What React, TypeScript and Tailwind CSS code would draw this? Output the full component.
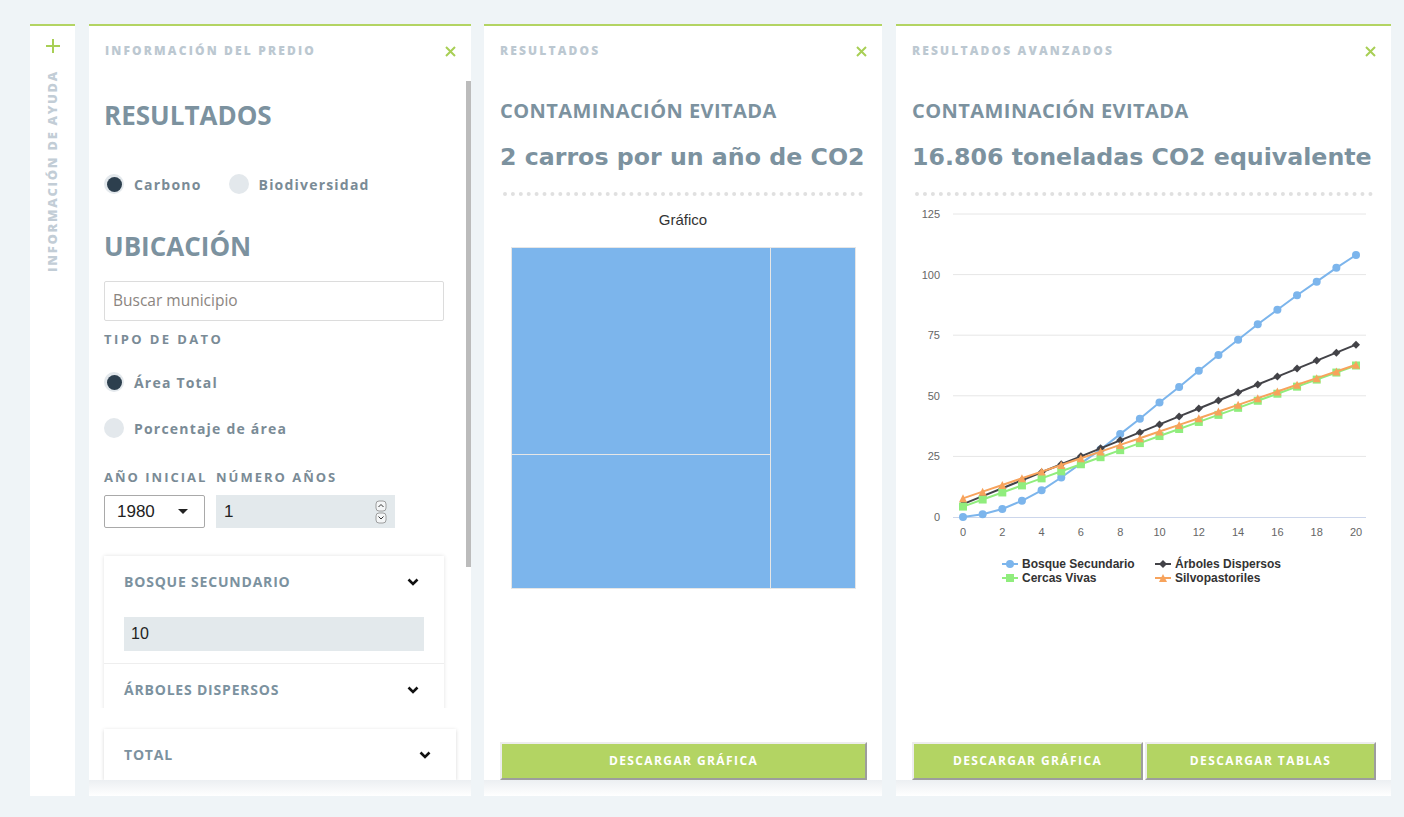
import React from "react";

const blue = [0, 1.1, 3.3, 6.7, 11.0, 16.3, 22.1, 27.8, 34.2, 40.5, 47.2, 53.6, 60.3, 66.8, 73.1, 79.5, 85.5, 91.5, 97.1, 102.8, 108.1];
const idx = Array.from({ length: 21 }, (_, i) => i);
const black = idx.map((i) => 5.3 + 3.29 * i);
const green = idx.map((i) => 4.3 + 2.91 * i);
const orange = idx.map((i) => 7.7 + 2.755 * i);

const xs = (i: number) => 51 + i * 19.65;
const ys = (v: number) => 312 - v * 2.424;

function CloseX() {
  return (
    <svg width="11" height="11" viewBox="0 0 11 11" className="mt-[3px] shrink-0">
      <path d="M1 1L10 10M10 1L1 10" stroke="#a8cf55" strokeWidth="2" />
    </svg>
  );
}

function Chevron() {
  return (
    <svg width="12" height="8" viewBox="0 0 12 8" className="shrink-0">
      <path d="M1.5 1.5L6 6L10.5 1.5" fill="none" stroke="#111" strokeWidth="2.6" />
    </svg>
  );
}

function PanelHeader({ title }: { title: string }) {
  return (
    <div className="h-[55px] shrink-0 flex items-start justify-between pl-[16px] pr-[15px] pt-[17px]">
      <span className="text-[12px] leading-[16px] font-extrabold tracking-[2.15px] text-[#bcc8d1]">{title}</span>
      <CloseX />
    </div>
  );
}

function Radio({ checked }: { checked?: boolean }) {
  return checked ? (
    <span className="w-[20px] h-[20px] rounded-full bg-[#e3e8ec] flex items-center justify-center shrink-0">
      <span className="w-[15px] h-[15px] rounded-full bg-[#2d3f4e]" />
    </span>
  ) : (
    <span className="w-[20px] h-[20px] rounded-full bg-[#e3e8ec] shrink-0" />
  );
}

function AccHeader({ title }: { title: string }) {
  return (
    <div className="h-[51px] flex items-center justify-between pl-[20px] pr-[25px]">
      <span className="text-[14px] font-bold tracking-[0.8px] text-[#7c929f]">{title}</span>
      <Chevron />
    </div>
  );
}

function AccInput() {
  return (
    <div className="px-[20px] pt-[10px] pb-[12px]">
      <div className="h-[34px] bg-[#e3e9ec] flex items-center pl-[7px] text-[16px] text-[#222] font-['Liberation_Sans',Arial,sans-serif]">
        10
      </div>
    </div>
  );
}

function Footer({ children }: { children: React.ReactNode }) {
  return (
    <div className="shrink-0 flex flex-col">
      <div className="flex gap-[2px] pl-[16px] pr-[15px]">{children}</div>
      <div className="h-[16px] bg-gradient-to-b from-[#eceff2] to-white" />
    </div>
  );
}

function GreenButton({ label }: { label: string }) {
  return (
    <button className="flex-1 h-[38px] bg-[#b3d463] border-[2px] border-t-[#ededed] border-l-[#ededed] border-r-[#9d9d9d] border-b-[#9d9d9d] text-white text-[12px] font-bold tracking-[1.4px]">
      {label}
    </button>
  );
}

function Sidebar() {
  return (
    <div className="w-[45px] h-[772px] bg-white border-t-2 border-[#b3d463] flex flex-col items-center">
      <svg className="mt-[13px] ml-[1px]" width="14" height="14" viewBox="0 0 14 14">
        <path d="M7 0V14M0 7H14" stroke="#a8cf55" strokeWidth="2" />
      </svg>
      <div className="mt-[17px] [writing-mode:vertical-rl] rotate-180 text-[13px] font-extrabold tracking-[1.7px] text-[#c2cdd6] leading-none">
        INFORMACIÓN DE AYUDA
      </div>
    </div>
  );
}

const labelCls = "text-[14px] font-bold tracking-[1.2px] text-[#7a8b96]";
const smallHead = "text-[13px] leading-[16px] font-bold tracking-[2.4px] text-[#7a8b96]";
const bigHead = "text-[26px] leading-[32px] font-bold text-[#7c929f]";

function Panel1() {
  return (
    <div className="ml-[14px] w-[382px] h-[772px] bg-white border-t-2 border-[#b3d463] flex flex-col">
      <PanelHeader title="INFORMACIÓN DEL PREDIO" />
      <div className="h-[627px] shrink-0 flex">
        <div className="flex-1 overflow-hidden pl-[15px] pr-[22px]">
          <h2 className={"mt-[18px] " + bigHead}>RESULTADOS</h2>
          <div className="mt-[43px] h-[20px] flex items-center">
            <Radio checked />
            <span className={"ml-[10px] " + labelCls}>Carbono</span>
            <span className="ml-[27px]" />
            <Radio />
            <span className={"ml-[10px] " + labelCls}>Biodiversidad</span>
          </div>
          <h2 className={"mt-[36px] " + bigHead}>UBICACIÓN</h2>
          <div className="mt-[19px] h-[40px] border border-[#dcdcdc] rounded-[2px] flex items-center pl-[8px] text-[15.5px] text-[#8b857f]">
            Buscar municipio
          </div>
          <div className={"mt-[10px] " + smallHead}>TIPO DE DATO</div>
          <div className="mt-[25px] h-[20px] flex items-center">
            <Radio checked />
            <span className={"ml-[10px] " + labelCls}>Área Total</span>
          </div>
          <div className="mt-[26px] h-[20px] flex items-center">
            <Radio />
            <span className={"ml-[10px] " + labelCls}>Porcentaje de área</span>
          </div>
          <div className="mt-[31px] flex text-[13px] leading-[16px] font-bold tracking-[2px] text-[#7a8b96]">
            <span className="w-[112px] whitespace-nowrap">AÑO INICIAL</span>
            <span className="whitespace-nowrap">NÚMERO AÑOS</span>
          </div>
          <div className="mt-[10px] flex gap-[11px]">
            <div className="w-[101px] h-[33px] border border-[#a9a9a9] rounded-[2px] flex items-center justify-between pl-[12px] pr-[16px] font-['Liberation_Sans',Arial,sans-serif] text-[17px] text-[#222]">
              <span>1980</span>
              <svg width="10" height="5" viewBox="0 0 10 5">
                <path d="M0 0H10L5 5Z" fill="#222" />
              </svg>
            </div>
            <div className="w-[179px] h-[33px] bg-[#e3e9ec] flex items-center justify-between pl-[8px] pr-[8px] font-['Liberation_Sans',Arial,sans-serif] text-[17px] text-[#222]">
              <span>1</span>
              <svg width="12" height="24" viewBox="0 0 12 24">
                <rect x="1" y="1" width="10" height="10" rx="3" fill="#f4f6f7" stroke="#8a8a8a" strokeWidth="0.8" />
                <path d="M3.5 7L6 4.5L8.5 7" fill="none" stroke="#333" strokeWidth="1" />
                <rect x="1" y="13" width="10" height="10" rx="3" fill="#f4f6f7" stroke="#8a8a8a" strokeWidth="0.8" />
                <path d="M3.5 16.5L6 19L8.5 16.5" fill="none" stroke="#333" strokeWidth="1" />
              </svg>
            </div>
          </div>
          <div className="mt-[28px] bg-white shadow-[0_0_4px_rgba(0,0,0,0.12)]">
            <AccHeader title="BOSQUE SECUNDARIO" />
            <AccInput />
            <div className="h-px bg-[#eeeeee]" />
            <AccHeader title="ÁRBOLES DISPERSOS" />
          </div>
        </div>
        <div className="w-[5px] shrink-0">
          <div className="h-[486px] bg-[#bcbcbc]" />
        </div>
      </div>
      <div className="flex-1 flex flex-col">
        <div className="pl-[15px] pr-[15px] pt-[21px]">
          <div className="h-[51px] bg-white shadow-[0_1px_4px_rgba(0,0,0,0.16)] flex items-center justify-between pl-[20px] pr-[25px]">
            <span className="text-[14px] font-bold tracking-[0.8px] text-[#7c929f]">TOTAL</span>
            <Chevron />
          </div>
        </div>
        <div className="flex-1 bg-gradient-to-b from-[#eceff2] to-white" />
      </div>
    </div>
  );
}

const contHead = "mt-[16px] text-[20px] leading-[28px] font-bold tracking-[0.45px] text-[#7c929f] whitespace-nowrap";
const bigValue = "mt-[16px] font-['DejaVu_Sans',sans-serif] text-[23.7px] leading-[32px] font-bold text-[#7c929f] whitespace-nowrap";

function Panel2() {
  return (
    <div className="ml-[13px] w-[398px] h-[772px] bg-white border-t-2 border-[#b3d463] flex flex-col">
      <PanelHeader title="RESULTADOS" />
      <div className="flex-1 px-[16px]">
        <div className={contHead}>CONTAMINACIÓN EVITADA</div>
        <div className={bigValue}>2 carros por un año de CO2</div>
        <div className="mt-[19px] mx-[3px] border-b-4 border-dotted border-[#e0e0e0]" />
        <div className="mt-[14px] text-center font-['Liberation_Sans',Arial,sans-serif] text-[15px] leading-[20px] text-[#333]">
          Gráfico
        </div>
        <div className="mt-[17px] mx-auto w-[345px] h-[342px] flex bg-[#e6e6e6] gap-px p-px">
          <div className="w-[258px] flex flex-col gap-px">
            <div className="h-[206px] bg-[#7cb5ec]" />
            <div className="flex-1 bg-[#7cb5ec]" />
          </div>
          <div className="flex-1 bg-[#7cb5ec]" />
        </div>
      </div>
      <Footer>
        <GreenButton label="DESCARGAR GRÁFICA" />
      </Footer>
    </div>
  );
}

function Marker({ kind, x, y }: { kind: string; x: number; y: number }) {
  if (kind === "circle") return <circle cx={x} cy={y} r={4} fill="#7cb5ec" />;
  if (kind === "diamond")
    return <path d={`M${x} ${y - 4}L${x + 4} ${y}L${x} ${y + 4}L${x - 4} ${y}Z`} fill="#434348" />;
  if (kind === "square") return <rect x={x - 4} y={y - 4} width={8} height={8} fill="#90ed7d" />;
  return <path d={`M${x} ${y - 4}L${x + 4} ${y + 4}L${x - 4} ${y + 4}Z`} fill="#f7a35c" />;
}

function Series({ data, color, kind }: { data: number[]; color: string; kind: string }) {
  const pts = data.map((v, i) => `${xs(i)},${ys(v)}`).join(" ");
  return (
    <g>
      <polyline points={pts} fill="none" stroke={color} strokeWidth={2} strokeLinejoin="round" />
      {data.map((v, i) => (
        <Marker key={i} kind={kind} x={xs(i)} y={ys(v)} />
      ))}
    </g>
  );
}

function LegendItem({ x, y, color, kind, label }: { x: number; y: number; color: string; kind: string; label: string }) {
  return (
    <g>
      <line x1={x} y1={y} x2={x + 16} y2={y} stroke={color} strokeWidth={2} />
      <Marker kind={kind} x={x + 8} y={y} />
      <text x={x + 20} y={y + 4} fontSize="12" fontWeight="bold" fill="#333">
        {label}
      </text>
    </g>
  );
}

function Chart() {
  const grid = [0, 25, 50, 75, 100, 125];
  return (
    <svg width="463" height="390" className="mt-[9px] font-['Liberation_Sans',Arial,sans-serif]">
      {grid.map((g) => (
        <g key={g}>
          {g !== 0 && <line x1={41} x2={454} y1={ys(g)} y2={ys(g)} stroke="#e6e6e6" strokeWidth={1} />}
          <text x={28} y={ys(g) + 4} fontSize="11" fill="#666" textAnchor="end">
            {g}
          </text>
        </g>
      ))}
      <line x1={41} x2={454} y1={312.5} y2={312.5} stroke="#ccd6eb" strokeWidth={1} />
      {idx
        .filter((i) => i % 2 === 0)
        .map((i) => (
          <text key={i} x={xs(i)} y={331} fontSize="11" fill="#666" textAnchor="middle">
            {i}
          </text>
        ))}
      <Series data={blue} color="#7cb5ec" kind="circle" />
      <Series data={black} color="#434348" kind="diamond" />
      <Series data={green} color="#90ed7d" kind="square" />
      <Series data={orange} color="#f7a35c" kind="triangle" />
      <LegendItem x={90} y={359} color="#7cb5ec" kind="circle" label="Bosque Secundario" />
      <LegendItem x={243} y={359} color="#434348" kind="diamond" label="Árboles Dispersos" />
      <LegendItem x={90} y={373} color="#90ed7d" kind="square" label="Cercas Vivas" />
      <LegendItem x={243} y={373} color="#f7a35c" kind="triangle" label="Silvopastoriles" />
    </svg>
  );
}

function Panel3() {
  return (
    <div className="ml-[14px] w-[495px] h-[772px] bg-white border-t-2 border-[#b3d463] flex flex-col">
      <PanelHeader title="RESULTADOS AVANZADOS" />
      <div className="flex-1 px-[16px]">
        <div className={contHead}>CONTAMINACIÓN EVITADA</div>
        <div className={bigValue}>16.806 toneladas CO2 equivalente</div>
        <div className="mt-[19px] ml-[3px] mr-[2px] border-b-4 border-dotted border-[#e0e0e0]" />
        <Chart />
      </div>
      <Footer>
        <GreenButton label="DESCARGAR GRÁFICA" />
        <GreenButton label="DESCARGAR TABLAS" />
      </Footer>
    </div>
  );
}

export default function App() {
  return (
    <div className="w-[1404px] min-h-[817px] bg-[#eff4f7] flex items-start pt-[24px] pl-[30px] font-['Open_Sans',sans-serif]">
      <Sidebar />
      <Panel1 />
      <Panel2 />
      <Panel3 />
    </div>
  );
}
